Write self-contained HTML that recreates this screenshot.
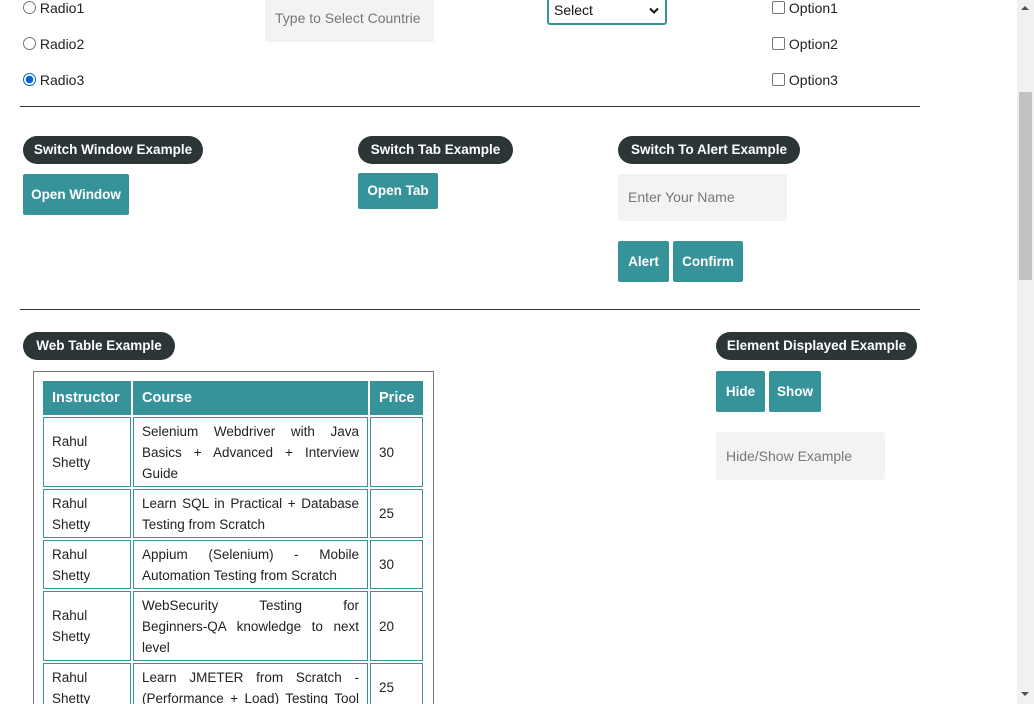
<!DOCTYPE html>
<html><head><meta charset="utf-8"><style>
*{box-sizing:border-box}
html,body{margin:0;width:1034px;height:704px;overflow:hidden}
body{background:#fff;font-family:"Liberation Sans",sans-serif;font-size:14px;color:#222;position:relative}
.a{position:absolute}
.lbl{font-size:14px;color:#222}
.rad{width:13px;height:13px;border:1px solid #767676;border-radius:50%;display:inline-block}
.chk{width:13px;height:13px;border:1px solid #767676;border-radius:2px;display:inline-block}
.pill{position:absolute;background:#2c3636;color:#fff;font-weight:bold;font-size:13.5px;height:28px;line-height:28px;border-radius:14px;white-space:nowrap;text-align:center}
.btn{position:absolute;background:#37939a;color:#fff;font-weight:bold;font-size:13.5px;border-radius:2px;text-align:center;white-space:nowrap}
.inp{position:absolute;background:#f3f3f3;color:#777;font-size:14px;border-radius:2px}
hr{position:absolute;margin:0;border:0;border-top:1px solid #2c3636;height:0}
table{border-collapse:separate;border-spacing:2px;table-layout:fixed}
td,th{border:1px solid #37939a;padding:0 8px;font-size:13.5px;line-height:21px;vertical-align:middle;text-align:left;overflow:hidden}
th{background:#37939a;color:#fff;height:34px;font-size:14.5px}
td.c span{display:block;text-align:justify;text-align-last:justify;white-space:nowrap}
td.c span.l{text-align-last:left}
</style></head><body>
<div class="a lbl" style="left:23px;top:0px"><span class="rad" style="vertical-align:-1px"></span> Radio1</div>
<div class="a lbl" style="left:23px;top:36px"><span class="rad" style="vertical-align:-1px"></span> Radio2</div>
<div class="a lbl" style="left:23px;top:72px"><span class="rad" style="vertical-align:-1px;border:1px solid #0066d6;background:radial-gradient(circle,#0066d6 0 3.5px,#fff 4px)"></span> Radio3</div>
<div class="inp" style="left:265px;top:-6px;width:169px;height:48px;line-height:48px;padding-left:10px">Type to Select Countrie</div>
<div class="a" style="left:547px;top:-4px;width:120px;height:29px;border:2px solid #37939a;border-radius:3px;font-size:14px;padding:4px 0 0 5px;color:#111">Select<svg style="position:absolute;right:6px;top:9px" width="10" height="7" viewBox="0 0 10 7"><path d="M1 1.5L5 5.5L9 1.5" stroke="#111" stroke-width="2" fill="none"/></svg></div>
<div class="a lbl" style="left:772px;top:0px"><span class="chk" style="vertical-align:-1px"></span> Option1</div>
<div class="a lbl" style="left:772px;top:36px"><span class="chk" style="vertical-align:-1px"></span> Option2</div>
<div class="a lbl" style="left:772px;top:72px"><span class="chk" style="vertical-align:-1px"></span> Option3</div>
<hr style="left:20px;top:106px;width:900px">
<div class="pill" style="left:23px;top:136px;width:180px">Switch Window Example</div>
<div class="btn" style="left:23px;top:174px;width:106px;height:41px;line-height:41px">Open Window</div>
<div class="pill" style="left:358px;top:136px;width:155px">Switch Tab Example</div>
<div class="btn" style="left:358px;top:173px;width:80px;height:36px;line-height:36px">Open Tab</div>
<div class="pill" style="left:618px;top:136px;width:182px">Switch To Alert Example</div>
<div class="inp" style="left:618px;top:174px;width:169px;height:47px;line-height:47px;padding-left:10px">Enter Your Name</div>
<div class="btn" style="left:618px;top:241px;width:51px;height:41px;line-height:41px">Alert</div>
<div class="btn" style="left:673px;top:241px;width:70px;height:41px;line-height:41px">Confirm</div>
<hr style="left:20px;top:309px;width:900px">
<div class="pill" style="left:23px;top:332px;width:152px">Web Table Example</div>
<div class="pill" style="left:716px;top:332px;width:201px">Element Displayed Example</div>
<div class="btn" style="left:716px;top:371px;width:49px;height:41px;line-height:41px">Hide</div>
<div class="btn" style="left:769px;top:371px;width:52px;height:41px;line-height:41px">Show</div>
<div class="inp" style="left:716px;top:432px;width:169px;height:48px;line-height:48px;padding-left:10px">Hide/Show Example</div>
<div class="a" style="left:33px;top:371px;width:401px;height:360px;border:1px solid #777;padding:7px 0 0 7px">
<table style="width:384px">
<col style="width:88px"><col style="width:235px"><col style="width:53px">
<tr><th>Instructor</th><th>Course</th><th>Price</th></tr>
<tr style="height:70px"><td>Rahul Shetty</td><td class="c"><span>Selenium Webdriver with Java</span><span>Basics + Advanced + Interview</span><span class="l">Guide</span></td><td>30</td></tr>
<tr style="height:49px"><td>Rahul Shetty</td><td class="c"><span>Learn SQL in Practical + Database</span><span class="l">Testing from Scratch</span></td><td>25</td></tr>
<tr style="height:49px"><td>Rahul Shetty</td><td class="c"><span>Appium (Selenium) - Mobile</span><span class="l">Automation Testing from Scratch</span></td><td>30</td></tr>
<tr style="height:70px"><td>Rahul Shetty</td><td class="c"><span>WebSecurity Testing for</span><span>Beginners-QA knowledge to next</span><span class="l">level</span></td><td>20</td></tr>
<tr style="height:49px"><td>Rahul Shetty</td><td class="c"><span>Learn JMETER from Scratch -</span><span>(Performance + Load) Testing Tool</span></td><td>25</td></tr>
</table></div>
<div class="a" style="left:1017px;top:0;width:17px;height:704px;background:#f1f1f1"></div>
<div class="a" style="left:1019px;top:92px;width:13px;height:188px;background:#c1c1c1"></div>
<div class="a" style="left:1021px;top:6px;width:0;height:0;border-left:4px solid transparent;border-right:4px solid transparent;border-bottom:4px solid #505050"></div>
<div class="a" style="left:1021px;top:692px;width:0;height:0;border-left:4px solid transparent;border-right:4px solid transparent;border-top:4px solid #505050"></div>
</body></html>
